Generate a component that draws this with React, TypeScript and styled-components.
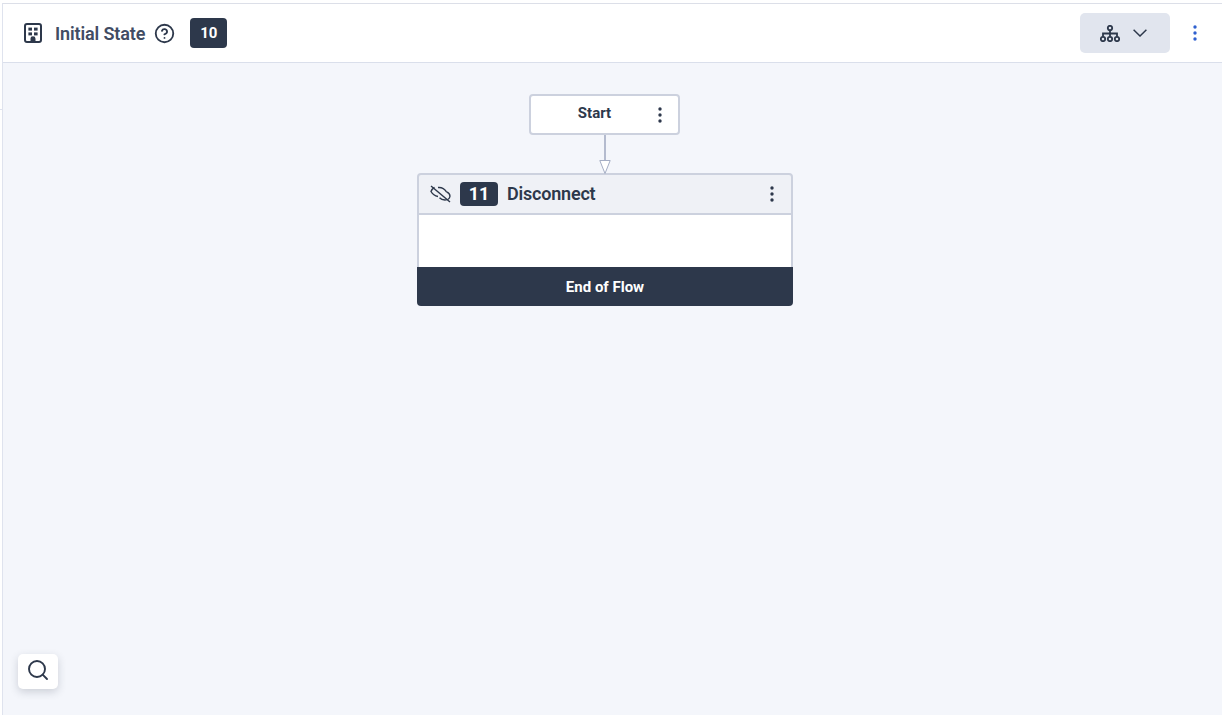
import styled, { createGlobalStyle } from "styled-components";
import { CircleHelp, Search } from "lucide-react";

const Global = createGlobalStyle`
    html, body {
        margin: 0;
        padding: 0;
        background: #fff;
        font-family: Roboto, "Liberation Sans", sans-serif;
    }
`;

const dark = "#2d384b";
const line = "#ccd1de";

const Page = styled.div`
    width: 1222px;
    height: 715px;
    box-sizing: border-box;
    padding: 3px 0 0 2px;
    display: flex;
    flex-direction: column;
    overflow: hidden;
    position: relative;
`;
const EdgeTick = styled.div`
    position: absolute;
    left: 0;
    top: 109px;
    width: 2px;
    height: 1px;
    background: #dfe3ee;
`;
const Frame = styled.div`
    flex: 1;
    display: flex;
    flex-direction: column;
    border-top: 1px solid #dcdfe8;
    border-left: 1px solid #dfe3ee;
    position: relative;
`;
const Header = styled.header`
    height: 58px;
    flex: none;
    display: flex;
    align-items: center;
    background: #fff;
    border-bottom: 1px solid #dadfeb;
    padding: 0 25px 0 21px;
`;
const TitleIcon = styled.svg`
    width: 18px;
    height: 20px;
    flex: none;
    display: block;
`;
const Title = styled.div`
    margin-left: 13px;
    font-size: 18px;
    font-weight: 600;
    color: #414c63;
    letter-spacing: -0.12px;
`;
const Help = styled(CircleHelp)`
    margin-left: 9px;
    color: ${dark};
`;
const Badge = styled.div<{ $big?: boolean }>`
    display: flex;
    align-items: center;
    justify-content: center;
    background: ${dark};
    color: #fff;
    font-weight: 700;
    border-radius: 4px;
    flex: none;
    width: ${(p) => (p.$big ? 38 : 37)}px;
    height: ${(p) => (p.$big ? 24 : 30)}px;
    font-size: ${(p) => (p.$big ? 18 : 15)}px;
`;
const HeaderBadge = styled(Badge)`
    margin-left: 15px;
`;
const Spacer = styled.div`
    flex: 1;
`;
const LayoutButton = styled.div`
    width: 90px;
    height: 40px;
    box-sizing: border-box;
    padding-left: 20px;
    margin-right: 23px;
    background: #e1e5ee;
    border-radius: 5px;
    display: flex;
    align-items: center;
    gap: 13px;
`;
const Canvas = styled.main`
    flex: 1;
    background: #f4f6fb;
    padding-top: 31px;
    padding-left: 414px;
    position: relative;
`;
const Flow = styled.div`
    width: 376px;
    display: flex;
    flex-direction: column;
    align-items: center;
`;
const StartNode = styled.div`
    width: 151px;
    height: 41px;
    margin-right: 1px;
    box-sizing: border-box;
    background: #fff;
    border: 2px solid ${line};
    border-radius: 4px;
    display: flex;
    align-items: center;
    padding-right: 16px;
    color: ${dark};
    font-size: 15px;
    font-weight: 700;
`;
const StartLabel = styled.div`
    flex: 1;
    text-align: center;
    padding-bottom: 3px;
`;
const Arrow = styled.svg`
    width: 14px;
    height: 39px;
    display: block;
    flex: none;
    position: relative;
    z-index: 1;
`;
const Node = styled.div`
    width: 376px;
    display: flex;
    flex-direction: column;
    margin-top: -1px;
`;
const NodeHead = styled.div`
    height: 42px;
    box-sizing: border-box;
    display: flex;
    align-items: center;
    background: #eff1f6;
    border: 2px solid ${line};
    border-radius: 4px 4px 0 0;
    padding: 0 17px 1px 11px;
`;
const NodeIcon = styled.svg`
    width: 21px;
    height: 18px;
    flex: none;
    display: block;
`;
const NodeTitle = styled.div`
    margin-left: 9px;
    font-size: 18px;
    font-weight: 600;
    color: ${dark};
    letter-spacing: -0.2px;
`;
const NodeBadge = styled(Badge)`
    margin-left: 9px;
`;
const NodeBody = styled.div`
    height: 52px;
    box-sizing: border-box;
    background: #fff;
    border-left: 2px solid ${line};
    border-right: 2px solid ${line};
`;
const NodeFoot = styled.div`
    height: 39px;
    display: flex;
    align-items: center;
    justify-content: center;
    background: ${dark};
    color: #fff;
    font-size: 15px;
    font-weight: 700;
    border-radius: 0 0 4px 4px;
`;
const DotsWrap = styled.svg<{ $blue?: boolean }>`
    width: 4px;
    height: 16px;
    flex: none;
    display: block;
    color: ${(p) => (p.$blue ? "#2f60cf" : dark)};
`;
const SearchButton = styled.div`
    position: absolute;
    left: 15px;
    bottom: 26px;
    width: 40px;
    height: 35px;
    box-sizing: border-box;
    padding-bottom: 3px;
    background: #fff;
    border-radius: 5px;
    box-shadow: 0 3px 8px rgba(45, 56, 75, 0.2);
    display: flex;
    align-items: center;
    justify-content: center;
    color: ${dark};
`;

const Dots = ({ blue }: { blue?: boolean }) => (
    <DotsWrap $blue={blue} viewBox="0 0 4 16" fill="currentColor">
        <circle cx="2" cy="2" r="1.7" />
        <circle cx="2" cy="8" r="1.7" />
        <circle cx="2" cy="14" r="1.7" />
    </DotsWrap>
);

const App = () => {
    return (
        <Page>
            <Global />
            <EdgeTick />
            <Frame>
                <Header>
                    <TitleIcon viewBox="0 0 18 20" fill="none">
                        <rect x="1" y="1" width="16" height="18" rx="2" stroke={dark} strokeWidth="2" />
                        <rect x="4.4" y="4.6" width="3.6" height="3" fill={dark} />
                        <rect x="10" y="4.6" width="3.6" height="3" fill={dark} />
                        <rect x="4.4" y="9.4" width="3.6" height="3" fill={dark} />
                        <rect x="10" y="9.4" width="3.6" height="3" fill={dark} />
                        <path d="M6.5 19v-3.2a2.5 2.5 0 0 1 5 0V19z" fill={dark} />
                    </TitleIcon>
                    <Title>Initial State</Title>
                    <Help size={21} strokeWidth={2.1} />
                    <HeaderBadge>10</HeaderBadge>
                    <Spacer />
                    <LayoutButton>
                        <svg width="20" height="17" viewBox="0 0 20 17" fill="none" stroke={dark} strokeWidth="1.8">
                            <circle cx="10" cy="3" r="2.2" />
                            <circle cx="3" cy="14" r="2.2" />
                            <circle cx="10" cy="14" r="2.2" />
                            <circle cx="17" cy="14" r="2.2" />
                            <path d="M10 5.2v6.6M3 11.8V8.5h14v3.3" />
                        </svg>
                        <svg width="14" height="8" viewBox="0 0 14 8" fill="none" stroke={dark} strokeWidth="1.5">
                            <path d="M.6.8 7 7 13.4.8" />
                        </svg>
                    </LayoutButton>
                    <Dots blue />
                </Header>
                <Canvas>
                    <Flow>
                        <StartNode>
                            <StartLabel>Start</StartLabel>
                            <Dots />
                        </StartNode>
                        <Arrow viewBox="0 0 14 39" fill="none">
                            <path d="M7 0v25" stroke="#a4adc4" strokeWidth="1.6" />
                            <path d="M1.800 25.500h10.400L7 38.500z" fill="#fff" stroke="#a4adc4" strokeWidth="1" />
                        </Arrow>
                        <Node>
                            <NodeHead>
                                <NodeIcon viewBox="0 0 21 18" fill="none" stroke={dark} strokeWidth="1.4">
                                    <path d="M1 1l19 16" />
                                    <path d="M4.500 2.300C2.800 3.300 1.500 4.800 1 6.500c1.500 2.600 4 4.400 7 5" />
                                    <path d="M8 2.500c3.500-.4 6.500 1.200 8.500 4.300" />
                                    <path d="M16.500 6.800c2.300.9 3.600 2.900 3.400 4.700-.3 2-2.500 3.500-5 3.500-2.200 0-4.100-.8-5.400-2.200" />
                                </NodeIcon>
                                <NodeBadge $big>11</NodeBadge>
                                <NodeTitle>Disconnect</NodeTitle>
                                <Spacer />
                                <Dots />
                            </NodeHead>
                            <NodeBody />
                            <NodeFoot>End of Flow</NodeFoot>
                        </Node>
                    </Flow>
                    <SearchButton>
                        <Search size={24} strokeWidth={1.9} />
                    </SearchButton>
                </Canvas>
            </Frame>
        </Page>
    );
};
export default App;
